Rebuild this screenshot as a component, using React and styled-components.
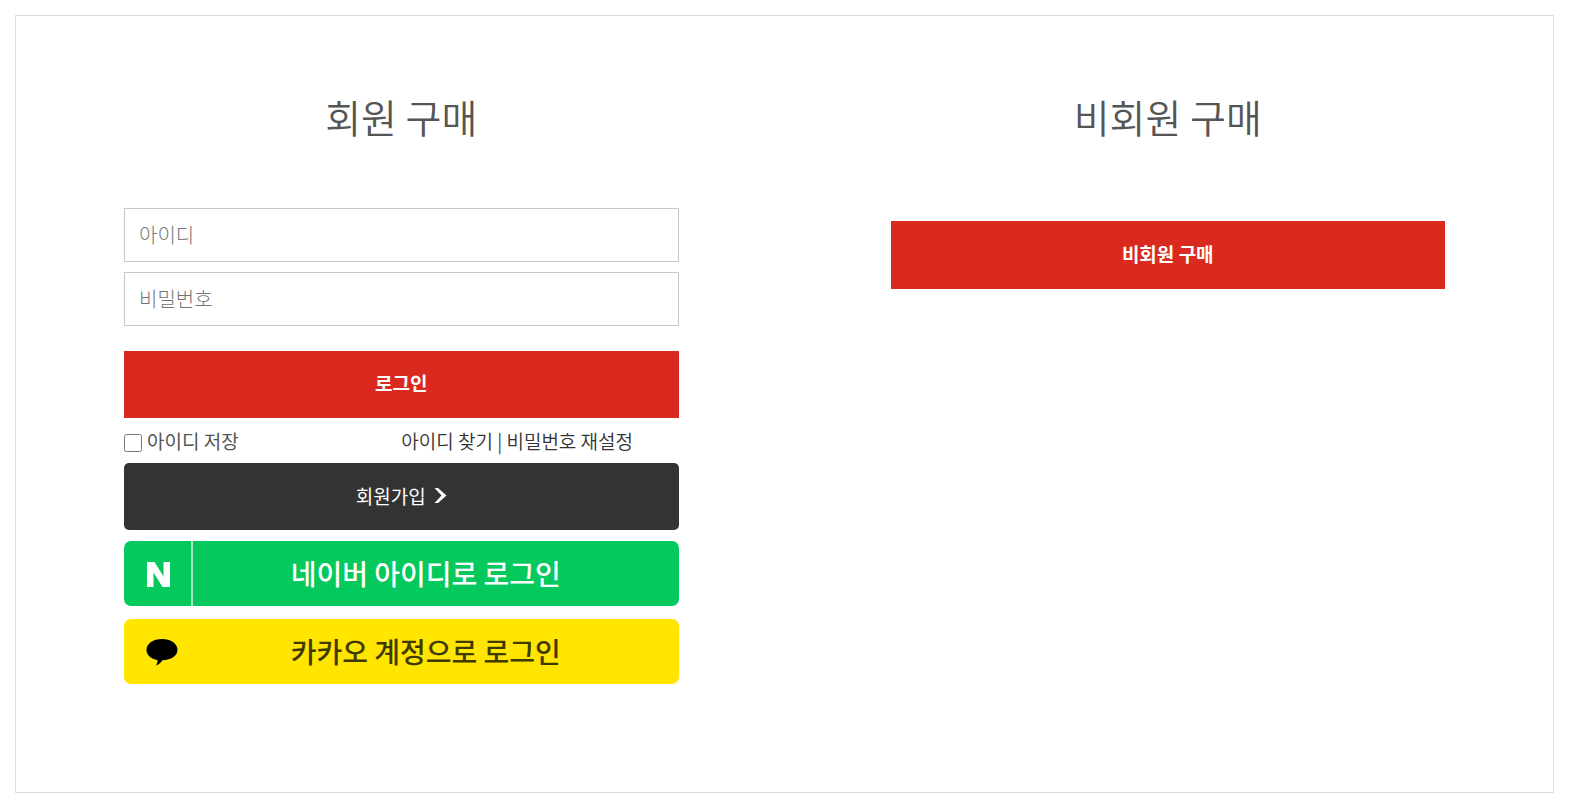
import React from "react";
import styled, { createGlobalStyle } from "styled-components";

const GlobalStyle = createGlobalStyle`
  *, *::before, *::after { box-sizing: border-box; }
  body {
    margin: 0;
    background: #fff;
    color: #333;
    font-family: "Noto Sans CJK KR", "Noto Sans", sans-serif;
    font-size: 19px;
    line-height: 28px;
  }
`;

const Frame = styled.main`
  display: grid;
  grid-template-columns: 1fr 1fr;
  gap: 212px;
  margin: 15px 15px 11px;
  padding: 70px 108px 108px;
  border: 1px solid #dcdcdc;
`;

const Column = styled.section`
  display: flex;
  flex-direction: column;
  min-width: 0;
`;

const Title = styled.h2`
  margin: 0;
  color: #555;
  font-size: 39px;
  font-weight: 350;
  line-height: 60px;
  text-align: center;
`;

const LoginForm = styled.form`
  display: flex;
  flex-direction: column;
  margin-top: 62px;
`;

const Fields = styled.div`
  display: flex;
  flex-direction: column;
  gap: 10px;
  margin-bottom: 25px;
`;

const TextField = styled.input`
  width: 100%;
  height: 54px;
  padding: 0 14px 2px;
  border: 1px solid #c9c8c1;
  border-radius: 0;
  background: #fff;
  color: #333;
  font-family: inherit;
  font-size: 20px;
  font-weight: 300;
  &::placeholder { color: #757575; opacity: 1; }
`;

const RedButton = styled.button`
  width: 100%;
  height: ${(p) => (p.$tall ? 68 : 67)}px;
  margin-top: ${(p) => (p.$tall ? 75 : 0)}px;
  padding: 0 0 4px;
  border: 0;
  background: #da291e;
  color: #fff;
  font-family: inherit;
  font-size: 19px;
  font-weight: 700;
  cursor: pointer;
`;

const Options = styled.div`
  display: grid;
  grid-template-columns: 1fr 1fr;
  align-items: center;
  height: 45px;
  padding-top: 1px;
`;

const SaveLabel = styled.label`
  display: flex;
  align-items: center;
  gap: 5px;
  color: #555;
`;

const Checkbox = styled.input`
  width: 18px;
  height: 18px;
  margin: 3px 0 0;
`;

const Links = styled.nav`
  font-weight: 350;
  white-space: nowrap;
`;

const TextLink = styled.a`
  color: #333;
  text-decoration: none;
`;

const JoinLink = styled.a`
  display: flex;
  align-items: center;
  justify-content: center;
  gap: 8px;
  height: 67px;
  padding-bottom: 2px;
  border-radius: 5px;
  background: #333;
  color: #fff;
  text-decoration: none;
`;

const SocialList = styled.div`
  display: flex;
  flex-direction: column;
  gap: 13px;
  margin-top: 11px;
`;

const SocialButton = styled.button`
  display: grid;
  grid-template-columns: 69px 1fr 20px;
  align-items: center;
  height: 65px;
  padding: 0;
  border: 0;
  border-radius: 7px;
  background: ${(p) => p.$background};
  color: ${(p) => p.$color};
  font-family: inherit;
  font-size: 28px;
  font-weight: 500;
  line-height: 40px;
  cursor: pointer;
`;

const SocialMark = styled.span`
  display: flex;
  align-items: center;
  justify-content: center;
  height: 100%;
  padding-left: ${(p) => (p.$divided ? 2 : 6)}px;
  padding-top: 2px;
  border-right: ${(p) => (p.$divided ? "2px solid #a8e9c4" : "0")};
`;

const SocialText = styled.span`
  padding-bottom: 2px;
`;

const Chevron = () => (
  <svg width="13" height="16" viewBox="0 0 13 16" aria-hidden="true">
    <path d="M0.500 0H4L12.500 7.500 4 15H0.500L7.500 7.500z" fill="#fff" />
  </svg>
);

const NaverMark = () => (
  <svg width="23" height="25" viewBox="0 0 23 25" aria-hidden="true">
    <path d="M0 0h7.500l9 14.500V0H23v25h-7.500L6.500 10.500V25H0z" fill="#fff" />
  </svg>
);

const KakaoMark = () => (
  <svg width="32" height="27" viewBox="0 0 32 27" aria-hidden="true">
    <path
      d="M16 0c8.800 0 15.500 4.700 15.500 10.800S25 21 16.500 21.300C14.800 23.500 12.600 25.900 10 26.400c1-1.700 1.500-3.400 1.700-5.200C4.800 20 0.500 16 0.500 10.800 0.500 4.700 7.200 0 16 0z"
      fill="#000"
    />
  </svg>
);

export default function App() {
  return (
    <>
      <GlobalStyle />
      <Frame>
        <Column>
          <Title>회원 구매</Title>
          <LoginForm onSubmit={(e) => e.preventDefault()}>
            <Fields>
              <TextField type="text" placeholder="아이디" aria-label="아이디" />
              <TextField type="password" placeholder="비밀번호" aria-label="비밀번호" />
            </Fields>
            <RedButton type="submit">로그인</RedButton>
            <Options>
              <SaveLabel htmlFor="save-id">
                <Checkbox id="save-id" type="checkbox" />
                아이디 저장
              </SaveLabel>
              <Links>
                <TextLink href="#find-id">아이디 찾기</TextLink> |{" "}
                <TextLink href="#reset-password">비밀번호 재설정</TextLink>
              </Links>
            </Options>
          </LoginForm>
          <JoinLink href="#join">
            회원가입
            <Chevron />
          </JoinLink>
          <SocialList>
            <SocialButton type="button" $background="#05c95c" $color="#fff">
              <SocialMark $divided>
                <NaverMark />
              </SocialMark>
              <SocialText>네이버 아이디로 로그인</SocialText>
            </SocialButton>
            <SocialButton type="button" $background="#ffe500" $color="#403900">
              <SocialMark>
                <KakaoMark />
              </SocialMark>
              <SocialText>카카오 계정으로 로그인</SocialText>
            </SocialButton>
          </SocialList>
        </Column>
        <Column>
          <Title>비회원 구매</Title>
          <RedButton type="button" $tall>비회원 구매</RedButton>
        </Column>
      </Frame>
    </>
  );
}
